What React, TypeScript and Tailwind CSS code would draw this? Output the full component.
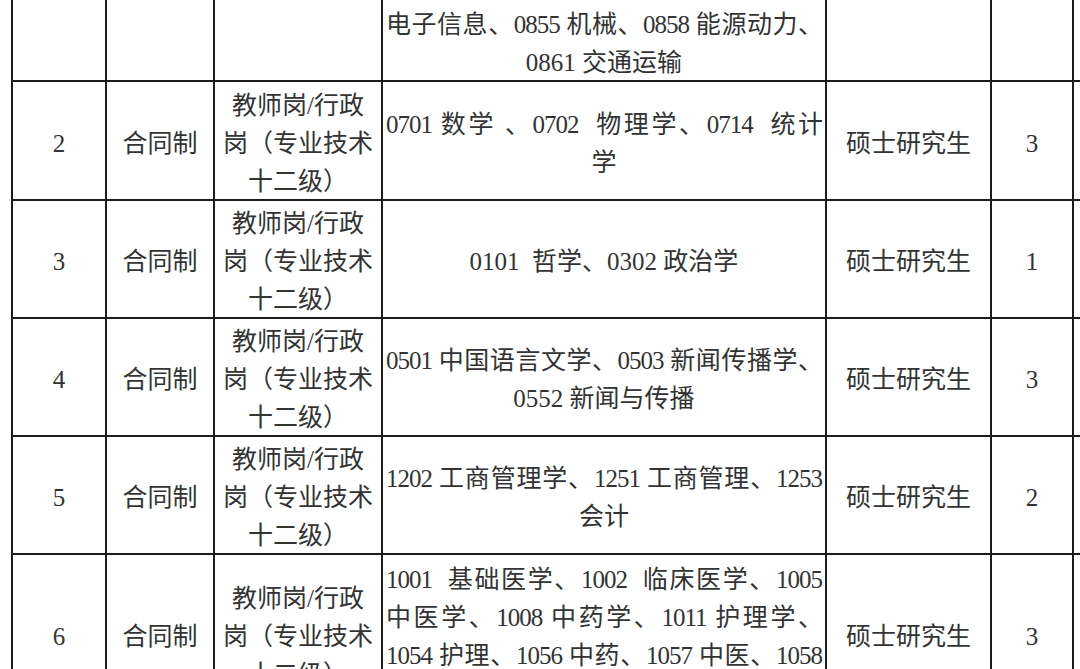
import React from 'react';

type Row = {
  no: string;
  kind: string;
  post: string[];
  major: { text: string; full?: boolean }[];
  degree: string;
  count: string;
  h: string;
};

const postLines = ['教师岗/行政', '岗（专业技术', '十二级）'];

const rows: Row[] = [
  {
    no: '',
    kind: '',
    post: [],
    major: [
      { text: '电子信息、0855 机械、0858 能源动力、', full: true },
      { text: '0861 交通运输' },
    ],
    degree: '',
    count: '',
    h: 'h-[81px]',
  },
  {
    no: '2',
    kind: '合同制',
    post: postLines,
    major: [
      { text: '0701 数学 、0702  物理学、0714  统计', full: true },
      { text: '学' },
    ],
    degree: '硕士研究生',
    count: '3',
    h: 'h-[119px]',
  },
  {
    no: '3',
    kind: '合同制',
    post: postLines,
    major: [{ text: '0101  哲学、0302 政治学' }],
    degree: '硕士研究生',
    count: '1',
    h: 'h-[118px]',
  },
  {
    no: '4',
    kind: '合同制',
    post: postLines,
    major: [
      { text: '0501 中国语言文学、0503 新闻传播学、', full: true },
      { text: '0552 新闻与传播' },
    ],
    degree: '硕士研究生',
    count: '3',
    h: 'h-[118px]',
  },
  {
    no: '5',
    kind: '合同制',
    post: postLines,
    major: [
      { text: '1202 工商管理学、1251 工商管理、1253', full: true },
      { text: '会计' },
    ],
    degree: '硕士研究生',
    count: '2',
    h: 'h-[118px]',
  },
  {
    no: '6',
    kind: '合同制',
    post: postLines,
    major: [
      { text: '1001  基础医学、1002  临床医学、1005', full: true },
      { text: '中医学、1008 中药学、1011 护理学、', full: true },
      { text: '1054 护理、1056 中药、1057 中医、1058', full: true },
      { text: '医学技术' },
    ],
    degree: '硕士研究生',
    count: '3',
    h: 'h-[160px]',
  },
];

const cell = 'border-2 border-[#1c1c1c] text-center align-middle p-0';

export default function App() {
  return (
    <div
      className="w-[1080px] h-[669px] overflow-hidden bg-white text-[#333333] text-[25px] leading-[38px]"
      style={{ fontFamily: '"Liberation Serif", "Noto Sans CJK SC", serif' }}
    >
      <table className="ml-[11px] border-collapse table-fixed w-[1180px]">
        <colgroup>
          <col className="w-[94px]" />
          <col className="w-[108px]" />
          <col className="w-[168px]" />
          <col className="w-[444px]" />
          <col className="w-[165px]" />
          <col className="w-[82px]" />
          <col className="w-[119px]" />
        </colgroup>
        <tbody>
          {rows.map((r, i) => {
            const top = i === 0 ? 'border-t-0' : '';
            return (
              <tr key={i} className={r.h}>
                <td className={`${cell} ${top}`}>
                  <div className="translate-y-[3px]">{r.no}</div>
                </td>
                <td className={`${cell} ${top}`}>
                  <div className="translate-y-[3px]">{r.kind}</div>
                </td>
                <td className={`${cell} ${top}`}>
                  <div className="translate-y-[3px]">
                    {r.post.map((l) => (
                      <div key={l} className="whitespace-nowrap">{l}</div>
                    ))}
                  </div>
                </td>
                <td className={`${cell} px-[3px] ${i === 0 ? 'border-t-0 align-bottom' : ''}`}>
                  <div className={i === 0 ? '-mb-[7px]' : 'translate-y-[3px]'}>
                    {r.major.map((l) => (
                      <div
                        key={l.text}
                        className={
                          l.full
                            ? 'whitespace-pre tracking-[-1px] text-justify [text-align-last:justify]'
                            : 'whitespace-pre text-center'
                        }
                      >
                        {l.text}
                      </div>
                    ))}
                  </div>
                </td>
                <td className={`${cell} ${top}`}>
                  <div className="translate-y-[3px]">{r.degree}</div>
                </td>
                <td className={`${cell} ${top}`}>
                  <div className="translate-y-[3px]">{r.count}</div>
                </td>
                <td className={`${cell} ${top}`}></td>
              </tr>
            );
          })}
        </tbody>
      </table>
    </div>
  );
}
